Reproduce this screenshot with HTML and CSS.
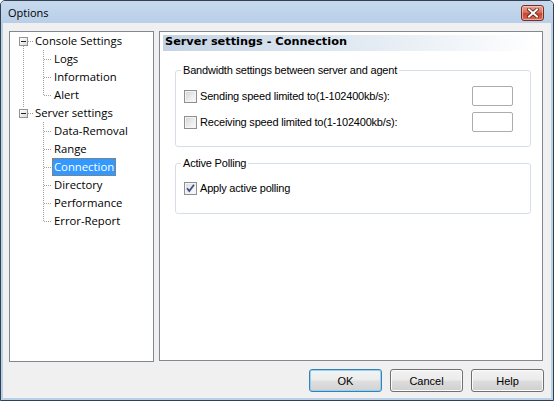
FILE: index.html
```html
<!DOCTYPE html>
<html>
<head>
<meta charset="utf-8">
<title>Options</title>
<link rel="stylesheet" href="styles.css">
</head>
<body>
<div class="window">
  <div class="titlebar">
    <span class="title">Options</span>
    <span class="close">
      <svg width="12" height="10" viewBox="0 0 12 10">
        <path d="M2 1.5 L10 8.5 M10 1.5 L2 8.5" stroke="#5a2018" stroke-width="3.6" stroke-linecap="square"/>
        <path d="M2 1.5 L10 8.5 M10 1.5 L2 8.5" stroke="#ffffff" stroke-width="2" stroke-linecap="square"/>
      </svg>
    </span>
  </div>
  <div class="client">
    <div class="main">
      <div class="tree">
        <div class="node parent p-first"><span class="exp"></span><span class="hl"></span><span class="txt">Console Settings</span></div>
        <div class="node child rootline"><span class="txt">Logs</span></div>
        <div class="node child rootline"><span class="txt">Information</span></div>
        <div class="node child rootline last"><span class="txt">Alert</span></div>
        <div class="node parent p-last"><span class="exp"></span><span class="hl"></span><span class="txt">Server settings</span></div>
        <div class="node child"><span class="txt">Data-Removal</span></div>
        <div class="node child"><span class="txt">Range</span></div>
        <div class="node child"><span class="txt selected">Connection</span></div>
        <div class="node child"><span class="txt">Directory</span></div>
        <div class="node child"><span class="txt">Performance</span></div>
        <div class="node child last"><span class="txt">Error-Report</span></div>
      </div>
      <div class="panel">
        <div class="header">Server settings - Connection</div>
        <fieldset class="group group-bw">
          <legend>Bandwidth settings between server and agent</legend>
          <div class="row">
            <span class="cb"></span>
            <span class="label">Sending speed limited to(1-102400kb/s):</span>
            <span class="input"></span>
          </div>
          <div class="row">
            <span class="cb"></span>
            <span class="label">Receiving speed limited to(1-102400kb/s):</span>
            <span class="input"></span>
          </div>
        </fieldset>
        <fieldset class="group group-poll">
          <legend>Active Polling</legend>
          <div class="row row-check">
            <span class="cb checked">
              <svg width="11" height="11" viewBox="0 0 11 11"><path d="M2 5.2 L4.3 8 L9 1.8" fill="none" stroke="#3e5283" stroke-width="1.8"/></svg>
            </span>
            <span class="label">Apply active polling</span>
          </div>
        </fieldset>
      </div>
    </div>
    <div class="buttons">
      <span class="btn default">OK</span>
      <span class="btn">Cancel</span>
      <span class="btn">Help</span>
    </div>
  </div>
</div>
</body>
</html>
```
FILE: styles.css
```css
html, body {
  margin: 0;
  padding: 0;
  background: #ffffff;
}

.window {
  width: 554px;
  height: 401px;
  box-sizing: border-box;
  border: 1px solid #34404e;
  border-radius: 5px 5px 0 0;
  background: #b9d0e9;
  padding: 0 2px 2px;
  display: flex;
  flex-direction: column;
  overflow: hidden;
}

.titlebar {
  height: 22px;
  flex: none;
  display: flex;
  align-items: center;
  justify-content: space-between;
  background: linear-gradient(#c6d9ee, #b9cfe8);
  margin: 0 -2px;
  padding: 0 9px 0 7px;
}

.title {
  font: 11px "Open Sans", "Liberation Sans", sans-serif;
  color: #000;
}

.close {
  width: 23px;
  height: 16px;
  margin-top: 2px;
  box-sizing: border-box;
  border: 1px solid #7a2c22;
  border-radius: 3px;
  background: linear-gradient(#e9a597 0%, #d8705c 45%, #c7452f 55%, #d66d55 100%);
  box-shadow: inset 0 0 0 1px rgba(255, 220, 210, 0.55);
  display: flex;
  align-items: center;
  justify-content: center;
}

.client {
  flex: 1;
  background: #f0f0f0;
  padding: 8px 8px 0 6px;
  box-sizing: border-box;
}

.main {
  display: flex;
  align-items: flex-start;
  gap: 5px;
}

/* ---------- tree ---------- */
.tree {
  width: 145px;
  height: 331px;
  box-sizing: border-box;
  border: 1px solid #828790;
  background: #fff;
  font: 11.3px "Open Sans", "Liberation Sans", sans-serif;
  color: #000;
}

.node {
  height: 18px;
  display: flex;
  align-items: center;
  background-repeat: no-repeat;
}

.parent {
  padding-left: 9px;
}

.exp {
  width: 9px;
  height: 9px;
  box-sizing: border-box;
  border: 1px solid #939393;
  background:
    linear-gradient(#222, #222) center / 5px 1px no-repeat,
    linear-gradient(135deg, #ffffff, #dcdcdc);
}

.hl {
  width: 6px;
  height: 1px;
  background: repeating-linear-gradient(to right, #a0a0a0 0 1px, transparent 1px 2px);
}

.parent .txt {
  margin-left: 1px;
  line-height: 16px;
}

.p-first {
  background-image: repeating-linear-gradient(to bottom, #a0a0a0 0 1px, transparent 1px 2px);
  background-position: 13px 14px;
  background-size: 1px 4px;
}

.p-last {
  background-image: repeating-linear-gradient(to bottom, #a0a0a0 0 1px, transparent 1px 2px);
  background-position: 13px 0;
  background-size: 1px 4px;
}

.child {
  padding-left: 42px;
  background-image:
    repeating-linear-gradient(to bottom, #a0a0a0 0 1px, transparent 1px 2px),
    repeating-linear-gradient(to right, #a0a0a0 0 1px, transparent 1px 2px);
  background-position: 33px 0, 34px 9px;
  background-size: 1px 18px, 8px 1px;
}

.child.last {
  background-size: 1px 10px, 8px 1px;
}

.child.rootline {
  background-image:
    repeating-linear-gradient(to bottom, #a0a0a0 0 1px, transparent 1px 2px),
    repeating-linear-gradient(to right, #a0a0a0 0 1px, transparent 1px 2px),
    repeating-linear-gradient(to bottom, #a0a0a0 0 1px, transparent 1px 2px);
  background-position: 33px 0, 34px 9px, 13px 0;
  background-size: 1px 18px, 8px 1px, 1px 18px;
}

.child.rootline.last {
  background-size: 1px 10px, 8px 1px, 1px 18px;
}

.child .txt {
  height: 18px;
  box-sizing: border-box;
  line-height: 16px;
  padding: 0 1px;
  border: 1px solid transparent;
}

.child .txt.selected {
  background: #3399ff;
  color: #fff;
  border: 1px dotted #b9721f;
}

/* ---------- right panel ---------- */
.panel {
  width: 384px;
  height: 330px;
  box-sizing: border-box;
  border: 1px solid #828790;
  background: #fff;
  padding: 3px;
  font: 11px "Liberation Sans", Arial, sans-serif;
  letter-spacing: -0.2px;
  color: #000;
}

.header {
  height: 16px;
  line-height: 16px;
  padding-left: 2px;
  background: linear-gradient(to right, #c4d3e4 0%, #e6edf4 60%, #ffffff 100%);
  font: bold 11.3px "DejaVu Sans", sans-serif;
  letter-spacing: 0;
  color: #000;
}

.group {
  border: 1px solid #d5dfe5;
  border-radius: 3px;
  margin: 0 8px 0 12px;
  min-width: 0;
}

.group legend {
  padding: 0 2px;
  line-height: 13px;
  color: #000;
}

.group-bw {
  margin-top: 13px;
  padding: 9px 17px 14px 5px;
}

.group-poll {
  margin-top: 10px;
  padding: 12px 17px 18px 5px;
}

.row {
  display: flex;
  align-items: center;
  height: 20px;
}

.row + .row {
  margin-top: 6px;
}

.row-check {
  height: 13px;
}

.cb {
  width: 13px;
  height: 13px;
  flex: none;
  box-sizing: border-box;
  margin-left: 3px;
  border: 1px solid #8e8f8f;
  background: linear-gradient(135deg, #cfd2d6 0%, #eeeeee 60%, #fbfbfb 100%);
  box-shadow: inset 0 0 0 1px #f4f4f4;
  display: flex;
  align-items: center;
  justify-content: center;
}

.cb.checked {
  background: linear-gradient(135deg, #d9dce0 0%, #f1f1f1 60%, #fcfcfc 100%);
}

.label {
  margin-left: 3px;
  flex: 1;
  line-height: 13px;
  white-space: nowrap;
}

.input {
  width: 41px;
  height: 20px;
  box-sizing: border-box;
  border: 1px solid #acacac;
  border-radius: 2px;
  background: #fff;
}

/* ---------- buttons ---------- */
.buttons {
  display: flex;
  justify-content: flex-end;
  gap: 8px;
  margin-top: 7px;
  margin-right: -1px;
}

.btn {
  width: 73px;
  height: 23px;
  box-sizing: border-box;
  border: 1px solid #707070;
  border-radius: 3px;
  background: linear-gradient(#f2f2f2 0%, #ebebeb 48%, #dddddd 52%, #cfcfcf 100%);
  box-shadow: inset 0 0 0 1px #fbfbfb;
  font: 11px "Liberation Sans", Arial, sans-serif;
  color: #000;
  display: flex;
  align-items: center;
  justify-content: center;
}

.btn.default {
  border-color: #3c7fb1;
  box-shadow: inset 0 0 0 1px #8fd4f5;
  background: linear-gradient(#f3f3f3 0%, #ececec 48%, #dfdfdf 52%, #d2d2d2 100%);
}
```
